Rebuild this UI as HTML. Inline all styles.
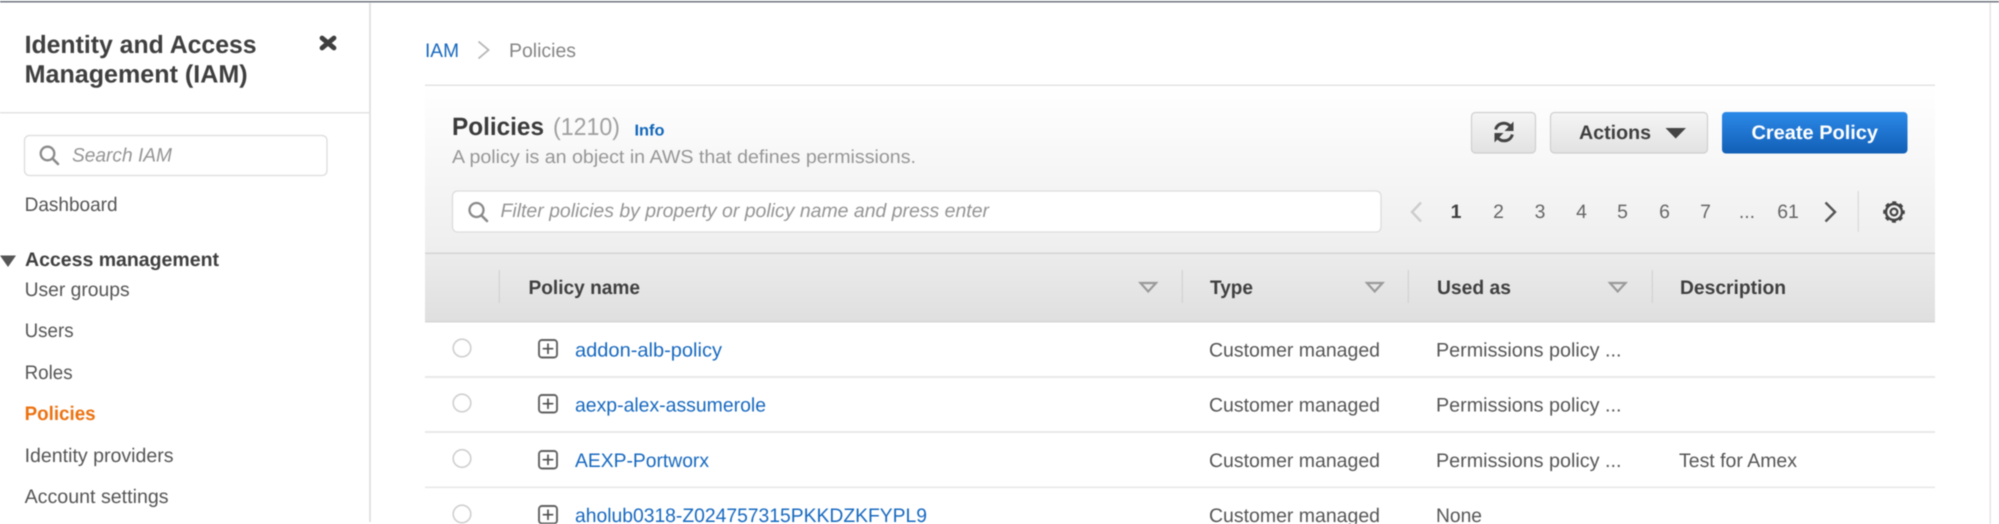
<!DOCTYPE html>
<html lang="en">
<head>
<meta charset="utf-8">
<title>Policies | IAM</title>
<style>
html,body{margin:0;padding:0;background:#fff;width:1999px;height:524px;overflow:hidden}
svg{display:block;filter:blur(.5px);font-family:"Liberation Sans",Arial,sans-serif;text-rendering:geometricPrecision}
.n{font-size:19.6px;fill:#555}
.l{font-size:19.6px;fill:#1668bf}
.b{font-size:19.6px;font-weight:700;fill:#3f3f3f}
.p{font-size:19.4px;fill:#666}
.i{font-size:19.4px;font-style:italic;fill:#949494}
</style>
</head>
<body>
<svg width="1999" height="524" viewBox="0 0 1999 524" xmlns="http://www.w3.org/2000/svg">
<defs>
<linearGradient id="hd" x1="0" y1="0" x2="0" y2="1"><stop offset="0" stop-color="#fff"/><stop offset="1" stop-color="#eee"/></linearGradient>
<linearGradient id="th" x1="0" y1="0" x2="0" y2="1"><stop offset="0" stop-color="#ececec"/><stop offset="1" stop-color="#dfdfdf"/></linearGradient>
<linearGradient id="btn" x1="0" y1="0" x2="0" y2="1"><stop offset="0" stop-color="#f5f5f5"/><stop offset="1" stop-color="#e2e2e2"/></linearGradient>
<linearGradient id="pri" x1="0" y1="0" x2="0" y2="1"><stop offset="0" stop-color="#2b89e8"/><stop offset="1" stop-color="#125fb6"/></linearGradient>
</defs>
<rect width="1999" height="524" fill="#fff"/>
<rect x="0" y="1" width="1999" height="1.5" fill="#6d757d"/>

<!-- Sidebar -->
<rect x="369" y="3" width="2" height="519" fill="#e3e3e3"/>
<rect x="0" y="112" width="370" height="1.5" fill="#e3e3e3"/>
<text x="24.6" y="52.8" font-size="25" font-weight="700" fill="#3f3f3f" textLength="232" lengthAdjust="spacingAndGlyphs">Identity and Access</text>
<text x="24.6" y="82.5" font-size="25" font-weight="700" fill="#3f3f3f" textLength="223" lengthAdjust="spacingAndGlyphs">Management (IAM)</text>
<path d="M322 38L334 48M334 38L322 48" stroke="#3f3f3f" stroke-width="4.8" stroke-linecap="round" fill="none"/>
<rect x="24.5" y="135.5" width="302.5" height="40" rx="5" fill="#fff" stroke="#dcdcdc" stroke-width="1.3"/>
<circle cx="47.5" cy="153.5" r="6.8" fill="none" stroke="#8a8a8a" stroke-width="2.3"/>
<path d="M52.5 158.5L58 164" stroke="#8a8a8a" stroke-width="2.6" stroke-linecap="round"/>
<text x="72" y="161.5" class="i" textLength="100" lengthAdjust="spacingAndGlyphs">Search IAM</text>
<text x="24.6" y="211" class="n" textLength="93" lengthAdjust="spacingAndGlyphs">Dashboard</text>
<path d="M0 255.5H16L8 267Z" fill="#555"/>
<text x="25" y="266" class="b" textLength="194" lengthAdjust="spacingAndGlyphs">Access management</text>
<text x="24.6" y="296" class="n" textLength="105" lengthAdjust="spacingAndGlyphs">User groups</text>
<text x="24.6" y="337" class="n" textLength="49" lengthAdjust="spacingAndGlyphs">Users</text>
<text x="24.6" y="379" class="n" textLength="48" lengthAdjust="spacingAndGlyphs">Roles</text>
<text x="24.6" y="420" font-size="19.6" font-weight="700" fill="#ec7211" textLength="71" lengthAdjust="spacingAndGlyphs">Policies</text>
<text x="24.6" y="462" class="n" textLength="149" lengthAdjust="spacingAndGlyphs">Identity providers</text>
<text x="24.6" y="503" class="n" textLength="144" lengthAdjust="spacingAndGlyphs">Account settings</text>

<!-- Breadcrumb -->
<text x="425" y="57" class="l" textLength="34" lengthAdjust="spacingAndGlyphs">IAM</text>
<path d="M478.5 41.5L488.5 50L478.5 58.5" fill="none" stroke="#b5b5b5" stroke-width="1.8"/>
<text x="509" y="57" font-size="19.6" fill="#858585" textLength="67" lengthAdjust="spacingAndGlyphs">Policies</text>
<rect x="425" y="84.5" width="1510" height="1.5" fill="#e3e3e3"/>

<!-- Panel header -->
<rect x="425" y="86" width="1510" height="167" fill="url(#hd)"/>
<text x="452" y="135" font-size="25" font-weight="700" fill="#3a3a3a" textLength="92" lengthAdjust="spacingAndGlyphs">Policies</text>
<text x="553" y="135" font-size="24.5" fill="#a0a0a0" textLength="67" lengthAdjust="spacingAndGlyphs">(1210)</text>
<text x="634.5" y="135.5" font-size="15.8" font-weight="700" fill="#1166bb" textLength="30" lengthAdjust="spacingAndGlyphs">Info</text>
<text x="452" y="163" font-size="18.8" fill="#969696" textLength="464" lengthAdjust="spacingAndGlyphs">A policy is an object in AWS that defines permissions.</text>

<!-- Buttons -->
<rect x="1471.5" y="112.5" width="64" height="40.5" rx="4" fill="url(#btn)" stroke="#cfcfcf" stroke-width="1.2"/>
<path d="M1495.6 129.5C1496.8 125.3 1500.2 123.2 1504 123.2C1507 123.2 1509 124.6 1510.6 126.5" fill="none" stroke="#444" stroke-width="3"/>
<path d="M1513.5 121.5V131H1504.5Z" fill="#444"/>
<path d="M1512.4 134.5C1511.2 138.7 1507.8 140.8 1504 140.8C1501 140.8 1499 139.4 1497.4 137.5" fill="none" stroke="#444" stroke-width="3"/>
<path d="M1494.5 142.5V133H1503.5Z" fill="#444"/>
<rect x="1550.5" y="112.5" width="157" height="40.5" rx="4" fill="url(#btn)" stroke="#cfcfcf" stroke-width="1.2"/>
<text x="1579" y="139" font-size="19.6" font-weight="700" fill="#3f3f3f" textLength="72" lengthAdjust="spacingAndGlyphs">Actions</text>
<path d="M1665.5 128H1686L1675.7 138.5Z" fill="#444"/>
<rect x="1722" y="112" width="185.5" height="41.5" rx="4" fill="url(#pri)"/>
<text x="1751.5" y="139" font-size="19.6" font-weight="700" fill="#fff" textLength="126.5" lengthAdjust="spacingAndGlyphs">Create Policy</text>

<!-- Filter -->
<rect x="452.5" y="191" width="928.5" height="41" rx="5" fill="#fff" stroke="#dcdcdc" stroke-width="1.3"/>
<circle cx="476.5" cy="210" r="7" fill="none" stroke="#8a8a8a" stroke-width="2.3"/>
<path d="M481.5 215.5L487 221" stroke="#8a8a8a" stroke-width="2.6" stroke-linecap="round"/>
<text x="500.5" y="217" class="i" textLength="488.5" lengthAdjust="spacingAndGlyphs">Filter policies by property or policy name and press enter</text>

<!-- Pagination -->
<path d="M1421 202.5L1412 212L1421 221.5" fill="none" stroke="#ccc" stroke-width="2.4"/>
<text x="1456" y="218" text-anchor="middle" font-size="19.4" font-weight="700" fill="#3f3f3f">1</text>
<text x="1498.5" y="218" text-anchor="middle" class="p">2</text>
<text x="1540" y="218" text-anchor="middle" class="p">3</text>
<text x="1581.5" y="218" text-anchor="middle" class="p">4</text>
<text x="1622.5" y="218" text-anchor="middle" class="p">5</text>
<text x="1664.5" y="218" text-anchor="middle" class="p">6</text>
<text x="1705.5" y="218" text-anchor="middle" class="p">7</text>
<text x="1747" y="218" text-anchor="middle" class="p">...</text>
<text x="1788" y="218" text-anchor="middle" class="p">61</text>
<path d="M1825.5 202.5L1835 212L1825.5 221.5" fill="none" stroke="#555" stroke-width="2.4"/>
<rect x="1857.5" y="191" width="1.5" height="41" fill="#dedede"/>
<circle cx="1894" cy="212" r="8" fill="none" stroke="#444" stroke-width="2.4"/>
<circle cx="1894" cy="212" r="9.6" fill="none" stroke="#444" stroke-width="2.4" stroke-dasharray="4 3.54" stroke-dashoffset="2"/>
<circle cx="1894" cy="212" r="3.4" fill="none" stroke="#444" stroke-width="2.2"/>

<!-- Table header -->
<rect x="425" y="253" width="1510" height="69" fill="url(#th)"/>
<rect x="425" y="252.7" width="1510" height="1.2" fill="#cfcfcf"/>
<rect x="425" y="321" width="1510" height="1.5" fill="#d6d6d6"/>
<rect x="498.7" y="270" width="1.2" height="33" fill="#d2d2d2"/>
<rect x="1181.7" y="270" width="1.2" height="33" fill="#d2d2d2"/>
<rect x="1407.7" y="270" width="1.2" height="33" fill="#d2d2d2"/>
<rect x="1651.7" y="270" width="1.2" height="33" fill="#d2d2d2"/>
<text x="528.5" y="294" class="b" textLength="111.5" lengthAdjust="spacingAndGlyphs">Policy name</text>
<text x="1210" y="294" class="b" textLength="43" lengthAdjust="spacingAndGlyphs">Type</text>
<text x="1437" y="294" class="b" textLength="74" lengthAdjust="spacingAndGlyphs">Used as</text>
<text x="1680" y="294" class="b" textLength="106" lengthAdjust="spacingAndGlyphs">Description</text>
<path d="M1140.5 283H1156L1148.2 291.5Z" fill="none" stroke="#9a9a9a" stroke-width="2.2"/>
<path d="M1367 283H1382.5L1374.7 291.5Z" fill="none" stroke="#9a9a9a" stroke-width="2.2"/>
<path d="M1610 283H1625.5L1617.7 291.5Z" fill="none" stroke="#9a9a9a" stroke-width="2.2"/>

<!-- Row lines -->
<rect x="425" y="376" width="1510" height="2" fill="#e8e8e8"/>
<rect x="425" y="431" width="1510" height="2" fill="#e8e8e8"/>
<rect x="425" y="486.5" width="1510" height="1.6" fill="#e8e8e8"/>

<!-- Row 1 -->
<circle cx="462" cy="348" r="8.8" fill="#fff" stroke="#cfcfcf" stroke-width="1.6"/>
<rect x="539" y="340" width="18" height="17.5" rx="3" fill="none" stroke="#606060" stroke-width="1.9"/>
<path d="M548 343.5V354M542.7 348.7H553.3" stroke="#505050" stroke-width="1.7"/>
<text x="575" y="356.3" class="l" textLength="147" lengthAdjust="spacingAndGlyphs">addon-alb-policy</text>
<text x="1209" y="356.3" class="n" textLength="171" lengthAdjust="spacingAndGlyphs">Customer managed</text>
<text x="1436" y="356.3" class="n" textLength="185.5" lengthAdjust="spacingAndGlyphs">Permissions policy ...</text>

<!-- Row 2 -->
<circle cx="462" cy="403" r="8.8" fill="#fff" stroke="#cfcfcf" stroke-width="1.6"/>
<rect x="539" y="395" width="18" height="17.5" rx="3" fill="none" stroke="#606060" stroke-width="1.9"/>
<path d="M548 398.5V409M542.7 403.7H553.3" stroke="#505050" stroke-width="1.7"/>
<text x="575" y="411.5" class="l" textLength="191" lengthAdjust="spacingAndGlyphs">aexp-alex-assumerole</text>
<text x="1209" y="411.5" class="n" textLength="171" lengthAdjust="spacingAndGlyphs">Customer managed</text>
<text x="1436" y="411.5" class="n" textLength="185.5" lengthAdjust="spacingAndGlyphs">Permissions policy ...</text>

<!-- Row 3 -->
<circle cx="462" cy="458.5" r="8.8" fill="#fff" stroke="#cfcfcf" stroke-width="1.6"/>
<rect x="539" y="451" width="18" height="17.5" rx="3" fill="none" stroke="#606060" stroke-width="1.9"/>
<path d="M548 454.5V465M542.7 459.7H553.3" stroke="#505050" stroke-width="1.7"/>
<text x="575" y="467" class="l" textLength="134" lengthAdjust="spacingAndGlyphs">AEXP-Portworx</text>
<text x="1209" y="467" class="n" textLength="171" lengthAdjust="spacingAndGlyphs">Customer managed</text>
<text x="1436" y="467" class="n" textLength="185.5" lengthAdjust="spacingAndGlyphs">Permissions policy ...</text>
<text x="1679" y="467" class="n" textLength="118" lengthAdjust="spacingAndGlyphs">Test for Amex</text>

<!-- Row 4 -->
<circle cx="462" cy="514" r="8.8" fill="#fff" stroke="#cfcfcf" stroke-width="1.6"/>
<rect x="539" y="506" width="18" height="17.5" rx="3" fill="none" stroke="#606060" stroke-width="1.9"/>
<path d="M548 509.5V520M542.7 514.7H553.3" stroke="#505050" stroke-width="1.7"/>
<text x="575" y="522" class="l" textLength="352" lengthAdjust="spacingAndGlyphs">aholub0318-Z024757315PKKDZKFYPL9</text>
<text x="1209" y="522" class="n" textLength="171" lengthAdjust="spacingAndGlyphs">Customer managed</text>
<text x="1436" y="522" class="n" textLength="46" lengthAdjust="spacingAndGlyphs">None</text>

<!-- Right edge line -->
<rect x="1989.5" y="3" width="1.5" height="521" fill="#e6e6e6"/>
</svg>
</body>
</html>
